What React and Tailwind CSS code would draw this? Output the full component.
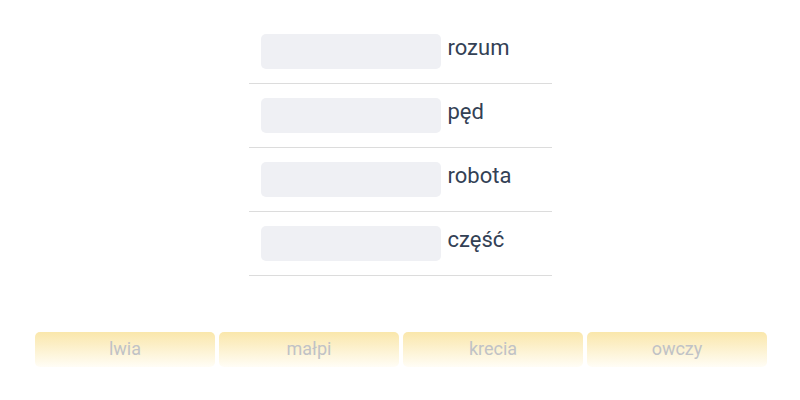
import React from 'react';

const words = ["rozum", "pęd", "robota", "część"];
const options = ["lwia", "małpi", "krecia", "owczy"];

export default function App() {
    return (
        <div className="w-[800px] h-[400px] bg-white flex flex-col items-center" style={{ fontFamily: "Roboto, 'Liberation Sans', sans-serif" }}>
            {/* lista zdań z lukami */}
            <div className="w-[303px] mt-[20px]">
                {words.map((w) => (
                    <div key={w} className="h-[64px] border-b border-[#dcdcdc] flex items-start pt-[14px] pl-[12px] gap-[7px]">
                        <div className="w-[180px] h-[35px] rounded-[5px] bg-[#eff0f4]" />
                        <span className="text-[22px] leading-[28px] text-[#334155]">{w}</span>
                    </div>
                ))}
            </div>

            {/* odpowiedzi do przeciągnięcia */}
            <div className="flex gap-[4px] mt-[56px] ml-[2px]">
                {options.map((o) => (
                    <div key={o} className="w-[180px] h-[35px] rounded-[5px] bg-[linear-gradient(to_bottom,#fae7ab,#fffdf6)] flex items-center justify-center pb-[3px] text-[18px] text-[#c0c2c6]">
                        {o}
                    </div>
                ))}
            </div>
        </div>
    );
}
